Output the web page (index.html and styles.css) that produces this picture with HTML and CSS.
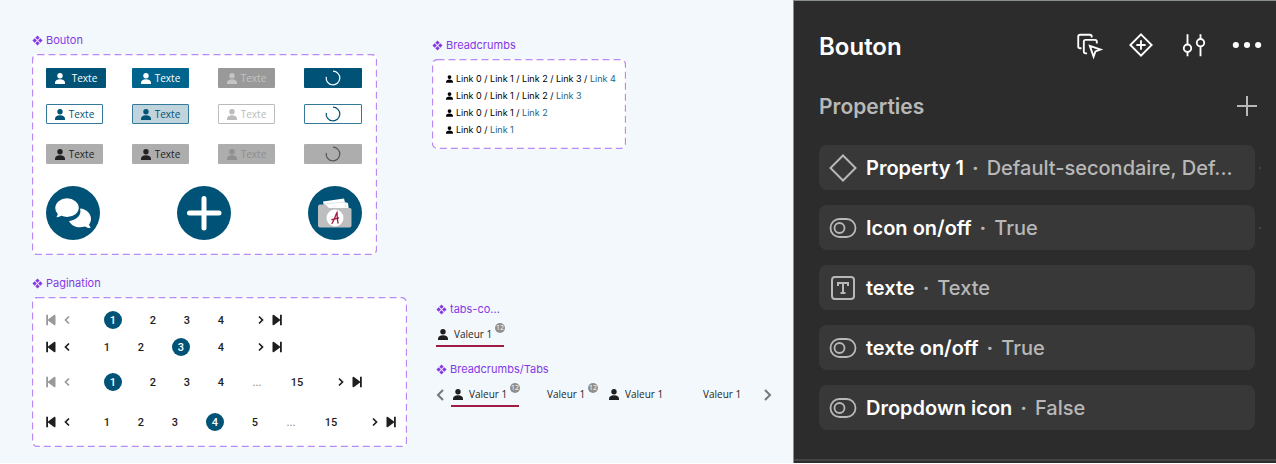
FILE: index.html
```html
<!DOCTYPE html>
<html lang="fr">
<head>
  <meta charset="UTF-8">
  <meta name="viewport" content="width=device-width, initial-scale=1.0">
  <title>Composants - Bouton</title>
  <link rel="stylesheet" href="styles.css">
</head>
<body>
  <!-- Icônes partagées -->
  <svg class="sprite" aria-hidden="true">
    <symbol id="component" viewBox="0 0 12 12">
      <path d="M6 .5l2.400 2.400L6 5.300 3.600 2.900zM6 6.700l2.400 2.400L6 11.500 3.600 9.100zM2.900 3.600L5.300 6 2.900 8.400.5 6zM9.100 3.600L11.500 6 9.100 8.400 6.700 6z"/>
    </symbol>
    <symbol id="user" viewBox="0 0 10 11">
      <circle cx="5" cy="2.7" r="2.7"/>
      <path d="M0 11V9.800C0 7.600 2 6.200 5 6.200s5 1.400 5 3.600V11z"/>
    </symbol>
    <symbol id="spinner" viewBox="0 0 16 16">
      <path d="M8 1.200A6.800 6.800 0 1 1 1.300 6.800" fill="none" stroke="currentColor" stroke-width="1.200"/>
    </symbol>
    <symbol id="first" viewBox="0 0 10 12">
      <path d="M0.200 .8h1.800v4.600L8 1Q9.500 .2 9.500 1.800v8.400q0 1.600-1.500.8L2 6.600v4.600H.2z"/>
    </symbol>
    <symbol id="last" viewBox="0 0 10 12">
      <path d="M9.800 .8H8v4.600L2 1Q.5.2.5 1.800v8.400q0 1.600 1.500.8l6-4.400v4.600h1.800z"/>
    </symbol>
    <symbol id="prev" viewBox="0 0 6 10">
      <path d="M5 1.500L1.500 5 5 8.500" fill="none" stroke="currentColor" stroke-width="1.700"/>
    </symbol>
    <symbol id="next" viewBox="0 0 6 10">
      <path d="M1 1.500L4.500 5 1 8.500" fill="none" stroke="currentColor" stroke-width="1.700"/>
    </symbol>
    <symbol id="toggle" viewBox="0 0 28 28">
      <g fill="none" stroke="currentColor" stroke-width="1.800">
        <rect x="1.500" y="5" width="25" height="18" rx="9"/>
        <circle cx="10.500" cy="14" r="5"/>
      </g>
    </symbol>
  </svg>

  <div class="app">
    <main class="canvas">
      <div class="column">
        <section>
          <h2 class="label"><svg><use href="#component"/></svg>Bouton</h2>
          <div class="frame frame-buttons">
            <svg class="dashes"><rect rx="5"/></svg>
            <div class="button-grid">
              <button class="btn primary wide"><svg class="user"><use href="#user"/></svg>Texte</button>
              <button class="btn primary hover"><svg class="user"><use href="#user"/></svg>Texte</button>
              <button class="btn primary off"><svg class="user"><use href="#user"/></svg>Texte</button>
              <button class="btn primary loading" aria-label="Chargement"><svg><use href="#spinner"/></svg></button>

              <button class="btn secondary"><svg class="user"><use href="#user"/></svg>Texte</button>
              <button class="btn secondary hover"><svg class="user"><use href="#user"/></svg>Texte</button>
              <button class="btn secondary off"><svg class="user"><use href="#user"/></svg>Texte</button>
              <button class="btn secondary loading" aria-label="Chargement"><svg><use href="#spinner"/></svg></button>
            </div>
            <div class="button-grid grays">
              <button class="btn gray"><svg class="user"><use href="#user"/></svg>Texte</button>
              <button class="btn gray"><svg class="user"><use href="#user"/></svg>Texte</button>
              <button class="btn gray off"><svg class="user"><use href="#user"/></svg>Texte</button>
              <button class="btn gray loading" aria-label="Chargement"><svg><use href="#spinner"/></svg></button>
            </div>
            <div class="rounds">
              <button class="round" aria-label="Messages">
                <svg viewBox="0 0 54 54">
                  <path fill="#fff" d="M34 22.500c6 .5 11 5 11 10.200 0 2.500-1 4.500-2 5.800.3 1.500 1.500 2.300 1.500 3.500-2.500.2-4-.5-5.500-1.500-6 2-13 .5-16-5.500 8-1 13-6 11-12.500z"/>
                  <path fill="#fff" stroke="#005376" stroke-width="1.500" d="M21 11.500c-7 0-12.500 4.700-12.500 10.500 0 2.500 1 4.500 2.500 6.200-.2 1.600-1.200 2.600-2.200 3.800 2.800.4 4.800-.4 6.400-1.500 1.800.8 3.700 1.200 5.800 1.200 7 0 12.500-4.400 12.500-9.900S28 11.500 21 11.500z"/>
                </svg>
              </button>
              <button class="round" aria-label="Ajouter">
                <svg viewBox="0 0 54 54">
                  <path d="M27 12.500v29.500M12.500 27H42" stroke="#fff" stroke-width="5" stroke-linecap="round"/>
                </svg>
              </button>
              <button class="round" aria-label="Notes">
                <svg viewBox="0 0 54 54">
                  <path fill="#fff" d="M15 15.500l21-3 1 4 3 .5 1 8H17z"/>
                  <path stroke="#ccd5d8" stroke-width=".6" fill="none" d="M16 18l20-2 3 1M37 16.500l1 5"/>
                  <path fill="#bcbec0" d="M12 18.500h5.500l3.500 3.500h21q1.500 0 1.500 1.500v16q0 2-2 2h-29.500q-2 0-2-2v-19q0-2 2-2z"/>
                  <circle cx="27" cy="32" r="8.500" fill="#fff"/>
                  <path fill="none" stroke="#a01c42" stroke-width="1.300" stroke-linecap="round" d="M24 37.500c2-3 3.500-8 5-11 .3 3 .2 7 1 10.500M24 33.500l6.500-1.500"/>
                </svg>
              </button>
            </div>
          </div>
        </section>

        <section>
          <h2 class="label"><svg><use href="#component"/></svg>Pagination</h2>
          <div class="frame frame-pagination">
            <svg class="dashes"><rect rx="5"/></svg>
            <nav class="pager">
              <button class="end" disabled aria-label="Début"><svg><use href="#first"/></svg></button>
              <button class="step" disabled aria-label="Précédent"><svg><use href="#prev"/></svg></button>
              <div class="pages"><button class="active">1</button><button>2</button><button>3</button><button>4</button></div>
              <button class="step" aria-label="Suivant"><svg><use href="#next"/></svg></button>
              <button class="end" aria-label="Fin"><svg><use href="#last"/></svg></button>
            </nav>
            <nav class="pager">
              <button class="end" aria-label="Début"><svg><use href="#first"/></svg></button>
              <button class="step" aria-label="Précédent"><svg><use href="#prev"/></svg></button>
              <div class="pages"><button>1</button><button>2</button><button class="active">3</button><button>4</button></div>
              <button class="step" aria-label="Suivant"><svg><use href="#next"/></svg></button>
              <button class="end" aria-label="Fin"><svg><use href="#last"/></svg></button>
            </nav>
            <nav class="pager spaced">
              <button class="end" disabled aria-label="Début"><svg><use href="#first"/></svg></button>
              <button class="step" disabled aria-label="Précédent"><svg><use href="#prev"/></svg></button>
              <div class="pages"><button class="active">1</button><button>2</button><button>3</button><button>4</button><span>...</span><button class="double">15</button></div>
              <button class="step" aria-label="Suivant"><svg><use href="#next"/></svg></button>
              <button class="end" aria-label="Fin"><svg><use href="#last"/></svg></button>
            </nav>
            <nav class="pager isolated">
              <button class="end" aria-label="Début"><svg><use href="#first"/></svg></button>
              <button class="step" aria-label="Précédent"><svg><use href="#prev"/></svg></button>
              <div class="pages"><button>1</button><button>2</button><button>3</button><button class="active">4</button><button>5</button><span>...</span><button class="double">15</button></div>
              <button class="step" aria-label="Suivant"><svg><use href="#next"/></svg></button>
              <button class="end" aria-label="Fin"><svg><use href="#last"/></svg></button>
            </nav>
          </div>
        </section>
      </div>

      <div class="column column-nav">
        <section>
          <h2 class="label"><svg><use href="#component"/></svg>Breadcrumbs</h2>
          <div class="frame frame-crumbs">
            <svg class="dashes"><rect rx="5"/></svg>
            <nav class="crumbs"><svg><use href="#user"/></svg><span><a href="#">Link 0</a> / <a href="#">Link 1</a> / <a href="#">Link 2</a> / <a href="#">Link 3</a> / <a href="#" class="current">Link 4</a></span></nav>
            <nav class="crumbs"><svg><use href="#user"/></svg><span><a href="#">Link 0</a> / <a href="#">Link 1</a> / <a href="#">Link 2</a> / <a href="#" class="current">Link 3</a></span></nav>
            <nav class="crumbs"><svg><use href="#user"/></svg><span><a href="#">Link 0</a> / <a href="#">Link 1</a> / <a href="#" class="current">Link 2</a></span></nav>
            <nav class="crumbs"><svg><use href="#user"/></svg><span><a href="#">Link 0</a> / <a href="#" class="current">Link 1</a></span></nav>
          </div>
        </section>

        <div class="tab-sections">
          <section>
            <h2 class="label"><svg><use href="#component"/></svg>tabs-co...</h2>
            <button class="tab selected"><svg><use href="#user"/></svg>Valeur 1<span class="badge">12</span></button>
          </section>
          <section>
            <h2 class="label"><svg><use href="#component"/></svg>Breadcrumbs/Tabs</h2>
            <div class="tab-bar">
              <button class="arrow" aria-label="Précédent"><svg viewBox="0 0 8 12"><path d="M7 1L2 6l5 5"/></svg></button>
              <div class="tabs">
                <button class="tab selected"><svg><use href="#user"/></svg>Valeur 1<span class="badge">12</span></button>
                <button class="tab plain">Valeur 1<span class="badge">12</span></button>
                <button class="tab"><svg><use href="#user"/></svg>Valeur 1</button>
                <button class="tab plain">Valeur 1</button>
              </div>
              <button class="arrow" aria-label="Suivant"><svg viewBox="0 0 8 12"><path d="M1 1l5 5-5 5"/></svg></button>
            </div>
          </section>
        </div>
      </div>
    </main>

    <!-- Panneau des propriétés -->
    <aside class="panel">
      <header class="panel-header">
        <h1>Bouton</h1>
        <div class="tools">
          <button aria-label="Sélection">
            <svg viewBox="0 0 28 28">
              <path d="M7 17.500H5.500q-2 0-2-2V5q0-2 2-2H16q2 0 2 2v1M13 23h-1.500q-2 0-2-2V10.500q0-2 2-2h10q2 0 2 2v2M16 15l11.500 4-5.500 2-2 5.500z"/>
            </svg>
          </button>
          <button aria-label="Variante">
            <svg viewBox="0 0 28 28"><path d="M14 2.500L25.500 14 14 25.500 2.500 14zM14 9v10M9 14h10"/></svg>
          </button>
          <button aria-label="Réglages">
            <svg viewBox="0 0 28 28"><path d="M7 2.500v11M7 21.500v4.500M21 2.500v5M21 15.500v10.500"/><circle cx="7" cy="17.500" r="4"/><circle cx="21" cy="11.500" r="4"/></svg>
          </button>
          <button aria-label="Plus d'options">
            <svg viewBox="0 0 28 28" class="dots"><circle cx="2" cy="14" r="3.300"/><circle cx="14" cy="14" r="3.300"/><circle cx="26" cy="14" r="3.300"/></svg>
          </button>
        </div>
      </header>

      <div class="panel-section">
        <h2>Properties</h2>
        <button aria-label="Ajouter une propriété"><svg viewBox="0 0 22 22"><path d="M11 1v20M1 11h20"/></svg></button>
      </div>

      <ul class="props">
        <li class="marked">
          <svg viewBox="0 0 28 28"><path d="M14 1.500L26.500 14 14 26.500 1.500 14z"/></svg>
          <p><b>Property 1</b><i>·</i>Default-secondaire, Def...</p>
        </li>
        <li class="marked">
          <svg><use href="#toggle"/></svg>
          <p><b>Icon on/off</b><i>·</i>True</p>
        </li>
        <li>
          <svg viewBox="0 0 28 28"><rect x="3" y="3" width="22" height="22" rx="3"/><path d="M9 12V9h10v3M14 9v10M11.500 19h5"/></svg>
          <p><b>texte</b><i>·</i>Texte</p>
        </li>
        <li>
          <svg><use href="#toggle"/></svg>
          <p><b>texte on/off</b><i>·</i>True</p>
        </li>
        <li>
          <svg><use href="#toggle"/></svg>
          <p><b>Dropdown icon</b><i>·</i>False</p>
        </li>
      </ul>
    </aside>
  </div>
</body>
</html>
```

FILE: styles.css
```css
* {
  box-sizing: border-box;
}

body {
  margin: 0;
  background: #fff;
  font-family: Inter, "Liberation Sans", sans-serif;
}

h1, h2, p, ul {
  margin: 0;
  padding: 0;
}

button {
  padding: 0;
  border: none;
  background: none;
  color: inherit;
  font: inherit;
  cursor: pointer;
}

svg {
  display: block;
  flex: none;
  fill: currentColor;
}

.sprite {
  position: absolute;
  width: 0;
  height: 0;
}

.app {
  display: flex;
  min-height: calc(100vh - 1px);
}

/* Zone de dessin */
.canvas {
  flex: 1;
  display: flex;
  align-items: flex-start;
  gap: 25px;
  padding: 33px 0 16px 32px;
  background: #f2f8fc;
  color: #1e1e1e;
}

.column {
  display: flex;
  flex-direction: column;
  align-items: flex-start;
  gap: 21px;
}

.column-nav {
  padding-top: 5px;
  gap: 153px;
}

.tab-sections {
  display: flex;
  flex-direction: column;
  gap: 15px;
  padding-left: 4px;
}

.label {
  display: flex;
  align-items: center;
  gap: 3px;
  height: 14px;
  margin-bottom: 7px;
  color: #8638e5;
  font-size: 11px;
  font-weight: 400;
  line-height: 14px;
}

.label svg {
  width: 11px;
  height: 11px;
}

.frame {
  position: relative;
  width: fit-content;
  border-radius: 5px;
  background: #fff;
}

.dashes {
  position: absolute;
  inset: 0;
  width: 100%;
  height: 100%;
}

.dashes rect {
  x: 0.5px;
  y: 0.5px;
  width: calc(100% - 1px);
  height: calc(100% - 1px);
  fill: none;
  stroke: #b98af5;
  stroke-width: 1.3;
  stroke-dasharray: 7 4;
}

/* Boutons */
.frame-buttons {
  width: 345px;
  padding: 14px 15px 15px 14px;
}

.button-grid {
  display: grid;
  grid-template-columns: repeat(3, 86px) 58px;
  row-gap: 16px;
  position: relative;
}

.grays {
  margin: 20px 0 22px;
}

.btn {
  display: flex;
  align-items: center;
  justify-content: center;
  gap: 4px;
  width: 57px;
  height: 20px;
  border: 1px solid transparent;
  border-radius: 1px;
  font-family: "Open Sans", "Liberation Sans", sans-serif;
  font-size: 10px;
}

.btn.wide {
  width: 60px;
  gap: 7px;
}

.btn.loading {
  width: 58px;
}

.btn svg {
  width: 16px;
  height: 16px;
}

.btn .user {
  width: 10px;
  height: 11px;
}

.primary {
  background: #005376;
  color: #fff;
}

.primary.hover {
  background: #00648d;
}

.primary.off {
  background: #999;
  color: #c4c4c4;
}

.secondary {
  border-color: #35799a;
  background: #fff;
  color: #005376;
}

.secondary.hover {
  background: #bfd4dd;
}

.secondary.off {
  border-color: #bbb;
  color: #bbb;
}

.gray {
  background: #adadad;
  color: #222;
}

.gray.off {
  color: #8f8f8f;
}

.gray.loading {
  color: #555;
}

.rounds {
  display: flex;
  justify-content: space-between;
  position: relative;
}

.round {
  width: 54px;
  height: 54px;
  border-radius: 50%;
  background: #005376;
}

/* Pagination */
.frame-pagination {
  display: flex;
  flex-direction: column;
  gap: 9px;
  width: 375px;
  padding: 14px 10px 16px 14px;
}

.pager {
  display: flex;
  align-items: center;
  position: relative;
  height: 18px;
  font-family: Roboto, "Liberation Sans", sans-serif;
  font-size: 11px;
  font-weight: 500;
}

.pager.spaced {
  margin-top: 8px;
}

.pager.isolated {
  margin-top: 13px;
}

.pager .end svg {
  width: 10px;
  height: 12px;
}

.pager .step {
  width: 22px;
}

.pager .step svg {
  width: 6px;
  height: 10px;
  margin: 0 auto;
}

.pager button:disabled {
  color: #999;
}

.pages {
  display: flex;
  align-items: center;
  gap: 14px;
  margin: 0 19px;
}

.pages button {
  width: 20px;
}

.pages span {
  width: 24px;
  color: #999;
  text-align: center;
}

.pages .double {
  width: 28px;
}

.pages .active {
  width: 18px;
  height: 18px;
  margin: 0 7px;
  border-radius: 50%;
  background: #005376;
  color: #fff;
}

/* Fil d'Ariane */
.frame-crumbs {
  display: flex;
  flex-direction: column;
  gap: 5px;
  width: 194px;
  padding: 14px 10px 13px 14px;
}

.crumbs {
  display: flex;
  align-items: center;
  gap: 3px;
  position: relative;
  color: #000;
  font-size: 9px;
  line-height: 12px;
  white-space: nowrap;
}

.crumbs svg {
  width: 7px;
  height: 8px;
}

.crumbs a {
  color: inherit;
  text-decoration: none;
}

.crumbs .current {
  color: #1c6485;
}

/* Onglets */
.tab-bar {
  display: flex;
  align-items: center;
  gap: 7px;
}

.tabs {
  display: flex;
  gap: 10px;
  padding-right: 4px;
}

.tab {
  display: flex;
  align-items: center;
  gap: 6px;
  position: relative;
  width: 68px;
  height: 24px;
  padding-left: 2px;
  border-bottom: 2px solid transparent;
  font-family: "Open Sans", "Liberation Sans", sans-serif;
  font-size: 10px;
  white-space: nowrap;
}

.tab.selected {
  border-color: #a01c42;
}

.tab.plain {
  padding-left: 18px;
}

.tab svg {
  width: 10px;
  height: 11px;
}

.badge {
  position: absolute;
  top: 0;
  right: -1px;
  width: 10px;
  height: 10px;
  border-radius: 50%;
  background: #8f8f8f;
  color: #fff;
  font-size: 7px;
  line-height: 10px;
  text-align: center;
}

.arrow svg {
  width: 8px;
  height: 12px;
  fill: none;
  stroke: #777;
  stroke-width: 2;
}

/* Panneau latéral */
.panel {
  width: 483px;
  padding: 24px 12px 28px 25px;
  border-top: 1px solid #8a8f8f;
  border-left: 1px solid #8a8f8f;
  background: #2c2c2c;
  color: #fff;
  box-shadow: inset 0 -2px #2c2c2c, inset 0 -4px #444;
}

.panel svg {
  width: 28px;
  height: 28px;
  fill: none;
  stroke: currentColor;
  stroke-width: 2;
}

.panel-header,
.panel-section {
  display: flex;
  align-items: center;
  justify-content: space-between;
}

.panel-header {
  height: 42px;
}

.panel-header h1 {
  font-size: 24px;
  font-weight: 600;
}

.tools {
  display: flex;
  gap: 27px;
  padding: 0 4px 2px 0;
}

.tools svg {
  width: 26px;
  height: 26px;
  overflow: visible;
}

.panel .dots {
  fill: currentColor;
  stroke: none;
}

.panel-section {
  height: 36px;
  margin: 21px 6px 21px 0;
  color: #b8b8b8;
}

.panel-section h2 {
  font-size: 21px;
  font-weight: 600;
}

.panel-section svg {
  width: 22px;
  height: 22px;
}

.props {
  display: flex;
  flex-direction: column;
  gap: 15px;
  margin-right: 9px;
  list-style: none;
}

.props li {
  display: flex;
  align-items: center;
  gap: 9px;
  position: relative;
  height: 45px;
  padding: 0 16px 0 10px;
  border-radius: 8px;
  background: #383838;
  color: #b8b8b8;
}

.props .marked::after {
  content: "";
  position: absolute;
  right: -6px;
  width: 2px;
  height: 2px;
  background: #444;
}

.props p {
  font-size: 20px;
  font-weight: 500;
  white-space: nowrap;
}

.props b {
  color: #fff;
  font-weight: 600;
}

.props i {
  margin: 0 8px;
  font-style: normal;
  font-weight: 700;
}
```
